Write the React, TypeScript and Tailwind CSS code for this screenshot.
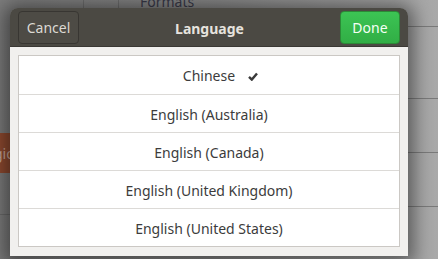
import React from "react";

const rows = [
  { label: "Chinese", checked: true },
  { label: "English (Australia)" },
  { label: "English (Canada)" },
  { label: "English (United Kingdom)" },
  { label: "English (United States)" },
];

export default function App() {
  return (
    <div
      className="relative w-[438px] h-[259px] overflow-hidden bg-[#8e8e8e]"
      style={{ fontFamily: '"Noto Sans", "Open Sans", sans-serif' }}
    >
      {/* backdrop window (dimmed) */}
      <div className="absolute inset-0 bg-gradient-to-r from-[#7c7c7c] via-[#8a8a8a] to-[#a9a9a9]" />
      <div className="absolute left-[83px] top-0 h-[8px] w-px bg-[#6e6e6e]" />
      <div className="absolute left-[118px] top-0 h-[8px] w-px bg-[#6e6e6e]" />
      <div className="absolute left-[140px] top-[-9px] text-[14px] text-[#3a3a4a]">Formats</div>
      <div className="absolute left-[0px] top-[133px] h-[40px] w-[12px] bg-[#8f4a30] overflow-hidden">
        <span className="absolute left-[-6px] top-[10px] text-[14px] text-[#c9a89a]">gio</span>
      </div>
      <div className="absolute left-0 top-[214px] h-px w-[12px] bg-[#6a6a6a]" />
      <div className="absolute right-0 top-[26px] h-px w-[40px] bg-[#7a7a7a]" />
      <div className="absolute right-0 top-[98px] h-px w-[40px] bg-[#7a7a7a]" />
      <div className="absolute right-0 top-[152px] h-px w-[40px] bg-[#7a7a7a]" />
      <div className="absolute right-0 top-[206px] h-px w-[40px] bg-[#7a7a7a]" />

      {/* dialog */}
      <div className="absolute left-[10px] top-[8px] w-[398px] h-[248px] rounded-t-[8px] flex flex-col shadow-[0_2px_18px_6px_rgba(0,0,0,0.45)]">
        <div className="h-[41px] rounded-t-[8px] bg-[#4b4943] flex items-center justify-between px-[8px] border-b border-[#3a3834]">
          <button className="h-[33px] w-[61px] rounded-[4px] border border-[#383632] bg-[#4d4b45] text-[14px] text-[#dcd9d3]">
            Cancel
          </button>
          <div className="text-[14px] font-bold text-[#e6e3de] pt-[2px]">Language</div>
          <button className="h-[33px] w-[60px] rounded-[4px] border border-[#2b8a36] bg-gradient-to-b from-[#3cc454] to-[#31ae45] text-[14px] text-[#f4fff4]">
            Done
          </button>
        </div>
        <div className="flex-1 bg-[#f1f0ee] px-[8px] pt-[8px] pb-[9px]">
          <div className="border border-[#cbc8c4] bg-white">
            {rows.map((r, i) => (
              <div
                key={r.label}
                className={`h-[38px] grid grid-cols-[1fr_auto_1fr] items-center text-[14px] text-[#3c3c3c] ${i > 0 ? "border-t border-[#dcdad7]" : ""}`}
              >
                <span />
                <span className="pt-[1px]">{r.label}</span>
                <span className="flex items-center">
                  {r.checked && (
                    <svg className="ml-[13px] mt-[2px]" width="10" height="9" viewBox="0 0 10 9">
                      <path d="M1 4.8 L3.8 7.6 L9 1.4" fill="none" stroke="#3a3a3a" strokeWidth="2.4" />
                    </svg>
                  )}
                </span>
              </div>
            ))}
          </div>
        </div>
      </div>
    </div>
  );
}
